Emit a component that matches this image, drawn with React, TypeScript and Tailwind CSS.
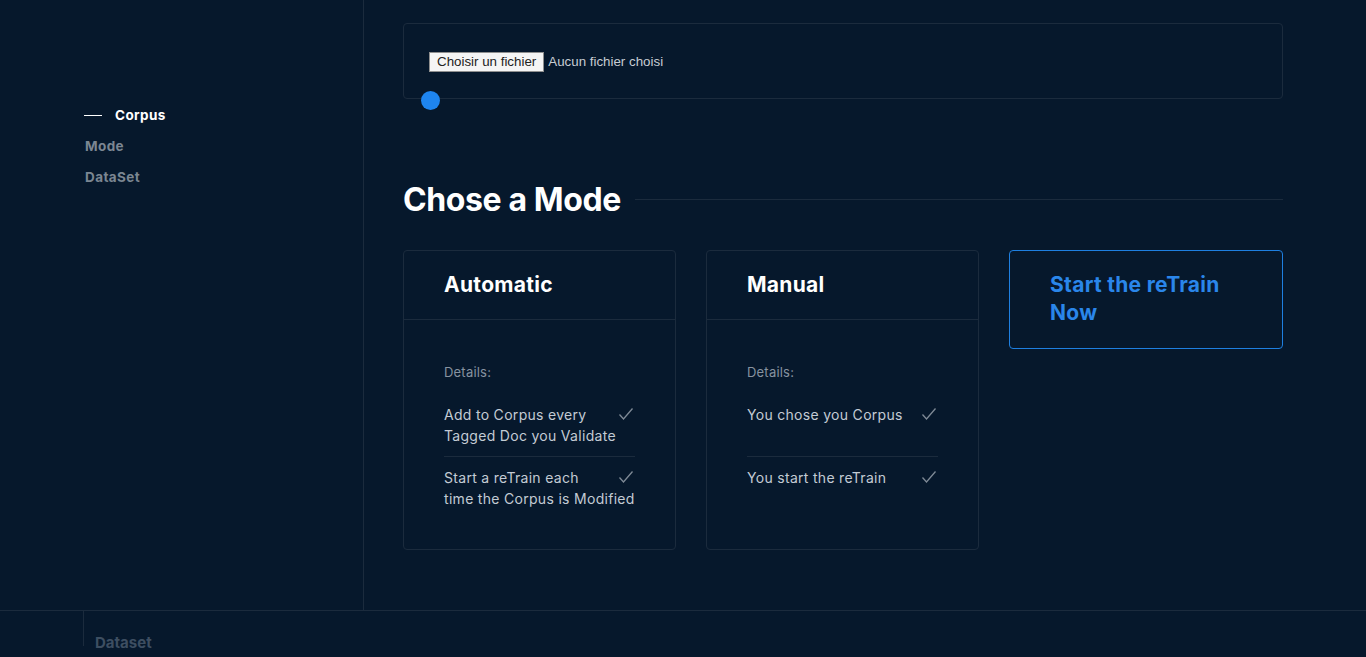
import React from "react";

const Check = () => (
  <svg width="16" height="14" viewBox="0 0 16 14" fill="none" className="absolute right-[1px] top-[3px]">
    <polyline points="1.5,7.5 5.5,12 14.5,1.5" stroke="#7f8a96" strokeWidth="1.3" fill="none" />
  </svg>
);

const Item = ({ lines, divider }: { lines: string[]; divider?: boolean }) => (
  <div className={`relative ${divider ? "border-b border-[#1b2b3d] pb-[10px] mb-[10px]" : ""}`}>
    <div className="text-[14px] leading-[21px] text-[#c3cbd4] tracking-[0.3px] whitespace-nowrap">
      {lines.map((l, i) => (
        <div key={i}>{l}</div>
      ))}
    </div>
    <Check />
  </div>
);

const ModeCard = ({ title, items }: { title: string; items: string[][] }) => (
  <div className="w-[273px] h-[300px] border border-[#1b2b3d] rounded-[4px]">
    <div className="h-[69px] border-b border-[#1b2b3d] px-[40px] flex items-center">
      <div className="text-[21px] font-bold text-white tracking-[0.3px]">{title}</div>
    </div>
    <div className="px-[40px] pt-[43px]">
      <div className="text-[13px] text-[#8793a0] mb-[21px] tracking-[0.2px]">Details:</div>
      <Item lines={items[0]} divider />
      <Item lines={items[1]} />
    </div>
  </div>
);

export default function App() {
  return (
    <div
      className="w-[1366px] h-[657px] overflow-hidden bg-[#06182c] flex flex-col"
      style={{ fontFamily: "Inter, 'Noto Sans', sans-serif" }}
    >
      <div className="flex h-[611px] border-b border-[#1b2b3d]">
        <aside className="w-[364px] border-r border-[#1b2b3d] pt-[106px] pl-[84px]">
          <div className="flex items-center h-[18px]">
            <div className="w-[18px] h-[1px] bg-white mr-[13px]" />
            <span className="text-[13.5px] font-bold text-white tracking-[0.4px]">Corpus</span>
          </div>
          <div className="mt-[13px] h-[18px] flex items-center pl-[1px] text-[13.5px] font-bold text-[#7b8692] tracking-[0.4px]">
            Mode
          </div>
          <div className="mt-[13px] h-[18px] flex items-center pl-[1px] text-[13.5px] font-bold text-[#7b8692] tracking-[0.4px]">
            DataSet
          </div>
        </aside>
        <main className="flex-1 pl-[39px] pr-[83px] pt-[23px]">
          <div className="relative h-[76px] border border-[#1b2b3d] rounded-[4px] pl-[25px] pt-[28px]">
            <div className="flex items-center" style={{ fontFamily: "'Liberation Sans', Arial, sans-serif" }}>
              <div className="h-[20px] px-[7px] bg-[#f5f5f5] border border-[#8f8f8f] text-[13.333px] text-[#222] flex items-center">
                Choisir un fichier
              </div>
              <span className="ml-[4px] text-[13.333px] text-[#c6ccd3]">Aucun fichier choisi</span>
            </div>
            <div className="absolute left-[17px] bottom-[-12px] w-[19px] h-[19px] rounded-full bg-[#1e85f0]" />
          </div>
          <div className="mt-[81px] flex items-center">
            <h2 className="text-[32px] font-bold text-white tracking-[-0.4px] leading-[40px]">Chose a Mode</h2>
            <div className="flex-1 h-[1px] bg-[#1b2b3d] ml-[14px] -mt-[1px]" />
          </div>
          <div className="mt-[30px] flex gap-[30px]">
            <ModeCard
              title="Automatic"
              items={[
                ["Add to Corpus every", "Tagged Doc you Validate"],
                ["Start a reTrain each", "time the Corpus is Modified"],
              ]}
            />
            <ModeCard title="Manual" items={[["You chose you Corpus", "\u00a0"], ["You start the reTrain"]]} />
            <div className="w-[274px] h-[99px] border border-[#1e7fe0] rounded-[4px] pl-[40px] pt-[20px]">
              <div className="text-[21px] font-bold text-[#2a86ea] leading-[28px] tracking-[0.3px]">
                Start the reTrain
                <br />
                Now
              </div>
            </div>
          </div>
        </main>
      </div>
      <div className="flex">
        <div className="ml-[83px] w-[1px] h-[35px] bg-[#1b2b3d]" />
        <div className="ml-[11px] pt-[21px] text-[15px] font-bold text-[#3d4e61]">Dataset</div>
      </div>
    </div>
  );
}
